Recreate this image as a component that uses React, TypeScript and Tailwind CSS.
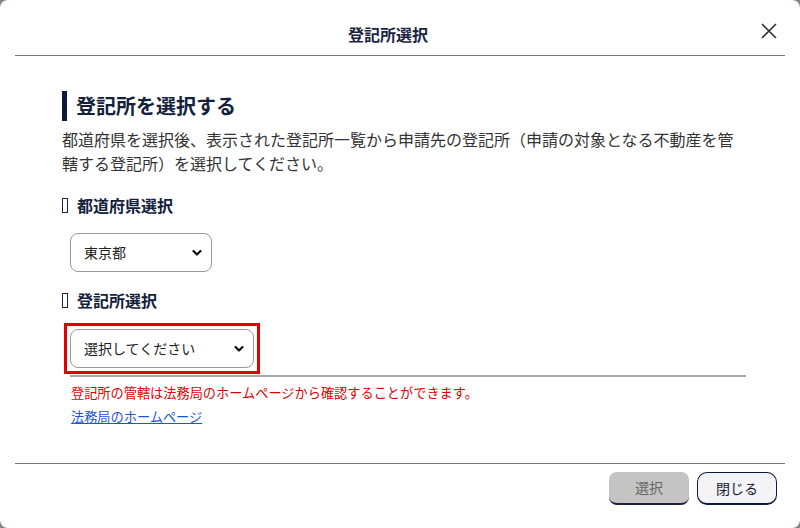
const jp = "font-['Noto_Sans_CJK_JP','Noto_Sans',sans-serif]";

function Chevron() {
  return (
    <svg width="10" height="7" viewBox="0 0 10 7" className="pointer-events-none absolute right-[10px] top-1/2 -translate-y-1/2">
      <path d="M1.5 1.5 L5 5 L8.5 1.5" fill="none" stroke="#111" strokeWidth="2.2" strokeLinecap="round" strokeLinejoin="round" />
    </svg>
  );
}

function SubHeading({ label }: { label: string }) {
  return (
    <div className="flex items-center h-[24px]">
      <span className="inline-block w-[6px] h-[15px] border-[1.5px] border-[#1a2340] mr-[9px] mt-[1px]"></span>
      <span className="text-[16px] font-bold text-[#14213d] leading-[24px]">{label}</span>
    </div>
  );
}

function Select({ value, width }: { value: string; width: string }) {
  return (
    <div className={`relative ${width} h-[39px]`}>
      <select
        defaultValue={value}
        className="appearance-none w-full h-full border border-[#9a9a9a] rounded-lg bg-white pl-[13px] text-[14px] text-[#222] outline-none"
      >
        <option>{value}</option>
      </select>
      <Chevron />
    </div>
  );
}

export default function App() {
  return (
    <div className={`w-[800px] h-[528px] bg-[#80858f] ${jp}`}>
      <div className="w-[800px] h-[528px] bg-white rounded-lg flex flex-col">
        <div className="mx-[15px] h-[56px] border-b-[1.5px] border-[#777] flex items-center pt-[12px]">
          <div className="flex-1 text-center text-[16px] font-bold text-[#1a2340] pl-[4px]">登記所選択</div>
          <button className="w-[24px] h-[24px] mr-[4px] flex items-center justify-center -mt-[6px]">
            <svg width="16" height="16" viewBox="0 0 16 16">
              <path d="M1 1 L15 15 M15 1 L1 15" stroke="#333" strokeWidth="1.6" fill="none" />
            </svg>
          </button>
        </div>

        <div className="flex-1 pl-[62px] pr-[54px]">
          <div className="mt-[35px] h-[30px] border-l-[5px] border-[#0d1a3e] pl-[9px] flex items-center">
            <h2 className="text-[20px] font-bold text-[#14213d]">登記所を選択する</h2>
          </div>
          <p className="mt-[6px] text-[16px] leading-[24px] text-[#333]">
            都道府県を選択後、表示された登記所一覧から申請先の登記所（申請の対象となる不動産を管轄する登記所）を選択してください。
          </p>

          <div className="mt-[18px]">
            <SubHeading label="都道府県選択" />
          </div>
          <div className="mt-[16px] ml-[8px]">
            <Select value="東京都" width="w-[142px]" />
          </div>

          <div className="mt-[16px]">
            <SubHeading label="登記所選択" />
          </div>
          <div className="mt-[11px] ml-[2px] inline-block border-[3px] border-[#e00000] p-[3px]">
            <Select value="選択してください" width="w-[184px]" />
          </div>

          <div className="ml-[8px] mt-[1px] border-t-2 border-[#a8a8a8]"></div>
          <div className="ml-[9px] mt-[6px] text-[13.2px] leading-[20px] text-[#e00000]">
            登記所の管轄は法務局のホームページから確認することができます。
          </div>
          <a href="#" className="ml-[9px] mt-[3px] inline-block text-[13.2px] leading-[20px] text-[#1a55d8] underline">
            法務局のホームページ
          </a>
        </div>

        <div className="mx-[15px] h-[65px] border-t-[1.5px] border-[#777] flex justify-end gap-[8px] pt-[8px] pr-[8px]">
          <button disabled className="w-[80px] h-[33px] rounded-lg bg-[#c4c4c4] border-b-2 border-[#1a2340] text-[14px] text-[#666]">
            選択
          </button>
          <button className="w-[80px] h-[33px] rounded-[10px] bg-[#f4f4f7] border-[1.5px] border-b-2 border-[#0d1a3e] text-[14px] text-[#1a1a2e]">
            閉じる
          </button>
        </div>
      </div>
    </div>
  );
}
